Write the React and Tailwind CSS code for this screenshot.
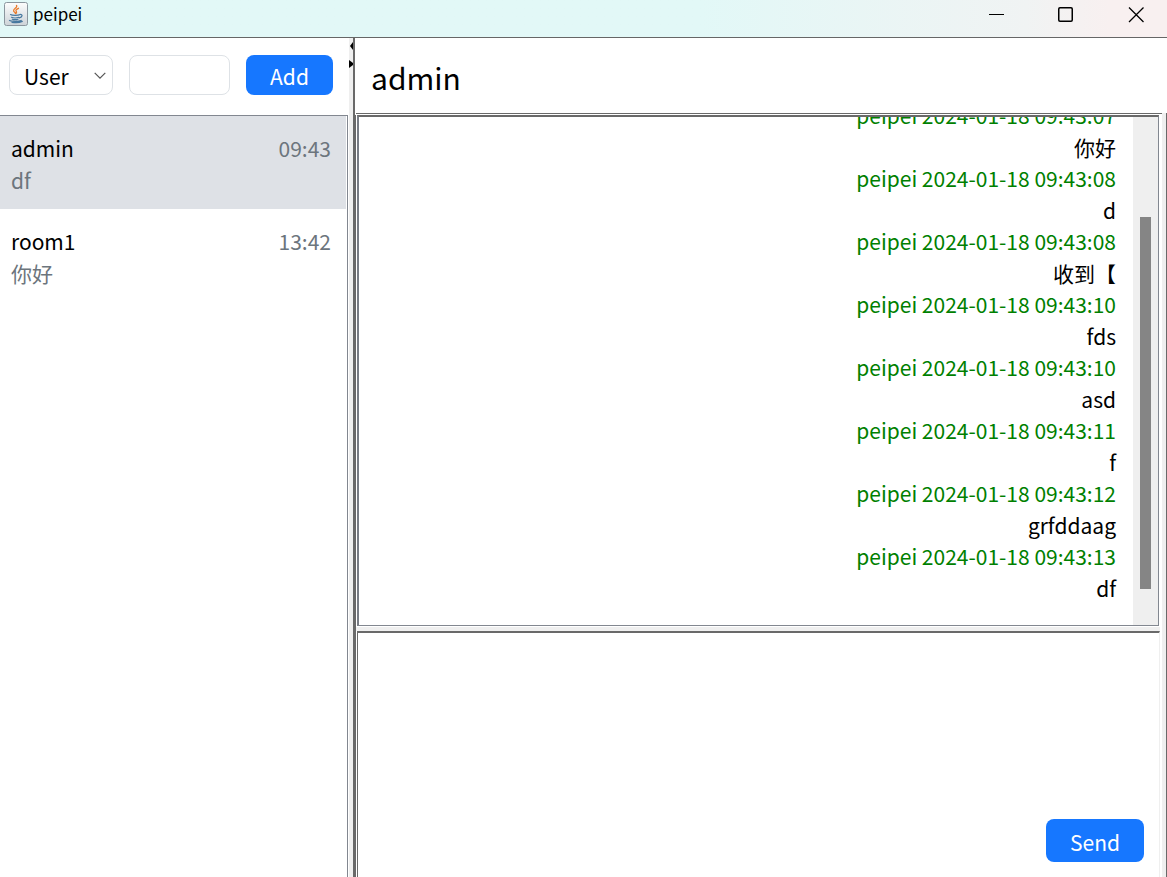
import React from "react";

const messages = [
  { time: "09:43:07", text: "你好" },
  { time: "09:43:08", text: "d" },
  { time: "09:43:08", text: "收到【" },
  { time: "09:43:10", text: "fds" },
  { time: "09:43:10", text: "asd" },
  { time: "09:43:11", text: "f" },
  { time: "09:43:12", text: "grfddaag" },
  { time: "09:43:13", text: "df" },
];

const chats = [
  { name: "admin", time: "09:43", last: "df", active: true },
  { name: "room1", time: "13:42", last: "你好", active: false },
];

function JavaIcon() {
  return (
    <svg width="24" height="24" viewBox="0 0 24 24" fill="none" aria-hidden="true">
      <defs>
        <linearGradient id="tile" x1="0" y1="0" x2="0" y2="1">
          <stop offset="0" stopColor="#fdfdfd" />
          <stop offset="1" stopColor="#cdd3d8" />
        </linearGradient>
      </defs>
      <rect x="0.5" y="0.5" width="23" height="23" rx="2" fill="url(#tile)" stroke="#8b969e" />
      <path d="M12.500 3.500c1.600 2-3.300 3.300-2.900 5.300.2 1 1.500 1.600 1.900 2.700M14.500 6.300c-2 .9-3.200 1.700-2.300 2.900.7 1 .5 1.500-.2 2.300" stroke="#ea7a2a" strokeWidth="1.300" strokeLinecap="round" />
      <path d="M6.500 12.600c1 .7 3 .8 4.700.8s3.700-.1 4.300-.6M15.800 12.600c3.200-.8 3 2.500-.5 3.200M7.500 15.300c2 .8 5.200.8 7.300 0M8.300 17.200c1.600.6 4 .6 5.700 0M5.500 18.500c2 1.100 9.500 1.200 11.700 0M8 20.300c3.500.5 8 .2 10.300-.9" stroke="#47789f" strokeWidth="1.200" strokeLinecap="round" />
    </svg>
  );
}

function TitleBar() {
  return (
    <header className="flex h-[38px] shrink-0 items-start justify-between border-b border-[#666] bg-linear-to-r from-[#e2f8f7] from-60% via-[#f0f3f3] via-88% to-[#f8f0f0] to-95%">
      <div className="flex items-center gap-1 pt-[2px] pl-1">
        <JavaIcon />
        <span className="pl-[1px] text-[17px] leading-6">peipei</span>
      </div>
      <div className="flex items-center gap-[54px] pt-[6px] pr-[22px]">
        <button type="button" aria-label="Minimize">
          <svg width="16" height="17" viewBox="0 0 16 17" className="block"><path d="M1 8.500h15" stroke="#000" /></svg>
        </button>
        <button type="button" aria-label="Maximize">
          <svg width="16" height="17" viewBox="0 0 16 17" fill="none" className="block"><rect x="0.750" y="1.750" width="13.500" height="13.500" rx="1.200" stroke="#000" strokeWidth="1.500" /></svg>
        </button>
        <button type="button" aria-label="Close">
          <svg width="17" height="17" viewBox="0 0 17 17" className="block"><path d="M1 1.500l14.500 14.500M15.500 1.500L1 16" stroke="#000" strokeWidth="1.300" /></svg>
        </button>
      </div>
    </header>
  );
}

function Sidebar() {
  return (
    <aside className="flex w-[349px] shrink-0 flex-col pr-[1px]">
      <form className="flex h-[77px] items-start gap-4 pt-[17px] pr-[15px] pl-[9px]" onSubmit={(e) => e.preventDefault()}>
        <div className="relative w-[104px]">
          <select aria-label="Type" className="h-10 w-full appearance-none rounded-lg border border-[#dee2e6] bg-white pt-[2px] pl-[14px] text-[21px] leading-8 text-black">
            <option>User</option>
            <option>Room</option>
          </select>
          <svg width="12" height="8" viewBox="0 0 12 8" fill="none" className="pointer-events-none absolute top-[17px] right-[7px]">
            <path d="M0.700 0.900L6 6.200l5.300-5.300" stroke="#555" strokeWidth="1.200" />
          </svg>
        </div>
        <input aria-label="Name" className="h-10 min-w-0 flex-1 rounded-lg border border-[#dee2e6] bg-white px-2 text-[21px]" />
        <button type="submit" className="h-10 w-[87px] rounded-lg bg-[#1677ff] pt-[2px] text-[21px] leading-8 text-white">Add</button>
      </form>
      <ul className="flex-1 border-t border-r border-[#828790] pr-[1px]">
        {chats.map((c) => (
          <li key={c.name} className={c.active ? "bg-[#dee1e6]" : "bg-white"}>
            <button type="button" className="block h-[93px] w-full pt-[2px] pr-[15px] pl-[11px] text-left text-[21px] leading-8">
              <span className="flex justify-between">
                <span>{c.name}</span>
                <span className="text-[#6c757d]">{c.time}</span>
              </span>
              <span className="block text-[#6c757d]">{c.last}</span>
            </button>
          </li>
        ))}
      </ul>
    </aside>
  );
}

function Divider() {
  return (
    <div className="flex w-1 shrink-0 flex-col items-end gap-[10px] bg-[#efefef] pt-1">
      <svg width="3" height="8" viewBox="0 0 3 8"><path d="M3 0v8L0 4z" /></svg>
      <svg width="4" height="8" viewBox="0 0 4 8"><path d="M0 0v8l4-3V3z" /></svg>
    </div>
  );
}

function Conversation() {
  return (
    <main className="flex min-w-0 flex-1 flex-col border-l-2 border-[#696969]">
      <h1 className="h-[75px] shrink-0 pt-4 pl-4 text-[30px] leading-[46px]">admin</h1>
      <div className="flex min-h-0 flex-1 border-r border-[#696969]">
        <div className="flex min-w-0 flex-1 flex-col border-r-4 border-[#efefef]">
          <div className="ml-[1px] h-[2px] shrink-0 border-t border-[#696969]" />
          <div className="flex min-h-0 flex-1 flex-col border-l border-[#696969]">
            <section className="mr-[3px] ml-[1px] flex min-h-0 flex-[511] border-t-2 border-r border-b border-l-2 border-t-[#696969] border-r-[#828790] border-b-[#828790] border-l-[#787c84]">
              <div className="flex min-w-0 flex-1 flex-col justify-end overflow-hidden pr-[17px] pb-[21px] text-right text-[21px]">
                {messages.map((m, i) => (
                  <div key={i} className="shrink-0">
                    <p className="h-[31px] leading-[31px] text-[#008000]">peipei 2024-01-18 {m.time}</p>
                    <p className="h-8 leading-8">{m.text}</p>
                  </div>
                ))}
              </div>
              <div className="flex w-[25px] flex-col bg-[#efefef] pl-[7px]">
                <div className="flex-[100]" />
                <div className="w-[11px] flex-[372] bg-[#858585]" />
                <div className="flex-[36]" />
              </div>
            </section>
            <div className="mt-[1px] mr-[2px] h-1 shrink-0 bg-[#efefef]" />
            <section className="mr-[2px] ml-[1px] flex min-h-0 flex-[246] flex-col border-t-2 border-r border-l border-t-[#696969] border-r-[#efefef] border-l-[#696969]">
              <textarea aria-label="Message" className="min-h-0 w-full flex-1 resize-none px-3 pt-2 text-[21px] outline-none" />
              <div className="flex shrink-0 justify-end pr-[15px] pb-[15px]">
                <button type="button" className="h-[43px] w-[98px] rounded-lg bg-[#1677ff] pt-[2px] text-[21px] leading-8 text-white">Send</button>
              </div>
            </section>
          </div>
        </div>
      </div>
    </main>
  );
}

export default function App() {
  return (
    <div className="flex h-screen flex-col overflow-hidden bg-white font-['Noto_Sans_CJK_SC',sans-serif] text-black">
      <TitleBar />
      <div className="flex min-h-0 flex-1">
        <Sidebar />
        <Divider />
        <Conversation />
      </div>
    </div>
  );
}
